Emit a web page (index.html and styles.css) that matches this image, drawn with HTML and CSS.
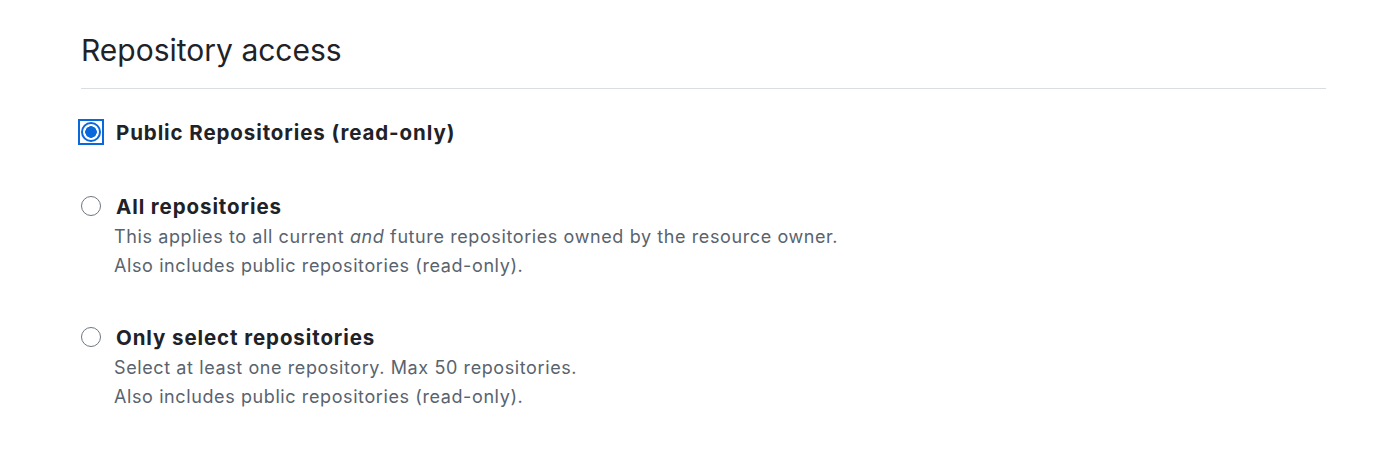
FILE: index.html
```html
<!DOCTYPE html>
<html lang="en">
<head>
    <meta charset="UTF-8">
    <meta name="viewport" content="width=device-width, initial-scale=1.0">
    <title>Repository access</title>
    <link rel="stylesheet" href="styles.css">
</head>
<body>
    <div class="section">
        <h2 class="section-title">Repository access</h2>

        <div class="option">
            <label class="option-head">
                <span class="focus-ring"><input type="radio" name="repo" checked></span>
                <span class="option-label">Public Repositories (read-only)</span>
            </label>
        </div>

        <div class="option">
            <label class="option-head">
                <span class="focus-ring blank"><input type="radio" name="repo"></span>
                <span class="option-label">All repositories</span>
            </label>
            <p class="note">This applies to all current <em>and</em> future repositories owned by the resource owner.<br>Also includes public repositories (read-only).</p>
        </div>

        <div class="option last">
            <label class="option-head">
                <span class="focus-ring blank"><input type="radio" name="repo"></span>
                <span class="option-label">Only select repositories</span>
            </label>
            <p class="note">Select at least one repository. Max 50 repositories.<br>Also includes public repositories (read-only).</p>
        </div>
    </div>
</body>
</html>
```

FILE: styles.css
```css
body {
    margin: 0;
    font-family: Inter, "Liberation Sans", Arial, sans-serif;
    color: #1f2328;
    background: #fff;
}
.section {
    width: 1245px;
    padding: 30px 0 0 81px;
}
.section-title {
    margin: 0;
    padding-bottom: 18px;
    font-size: 30px;
    font-weight: 400;
    line-height: 40px;
    border-bottom: 1px solid #d8dee4;
}
.option {
    margin-top: 28px;
}
.option + .option {
    margin-top: 44px;
}
.option.last {
    margin-top: 42px;
}
.option-head {
    display: flex;
    align-items: center;
    gap: 12px;
    height: 30px;
}
.focus-ring {
    display: flex;
    align-items: center;
    justify-content: center;
    width: 22px;
    height: 22px;
    margin-left: -3px;
    border: 2px solid #0969da;
}
.focus-ring.blank {
    border-color: transparent;
}
input[type="radio"] {
    appearance: none;
    margin: 0;
    width: 20px;
    height: 20px;
    border: 1.5px solid #6e7781;
    border-radius: 50%;
    background: #fff;
    box-sizing: border-box;
}
input[type="radio"]:checked {
    border: 2px solid #0969da;
    background: radial-gradient(circle, #0969da 0 5.5px, #fff 6px);
}
.option-label {
    font-size: 20.5px;
    font-weight: 700;
    letter-spacing: 0.9px;
}
.note {
    margin: 1px 0 0 33px;
    font-size: 18px;
    line-height: 29px;
    letter-spacing: 0.6px;
    color: #59636e;
}
```
